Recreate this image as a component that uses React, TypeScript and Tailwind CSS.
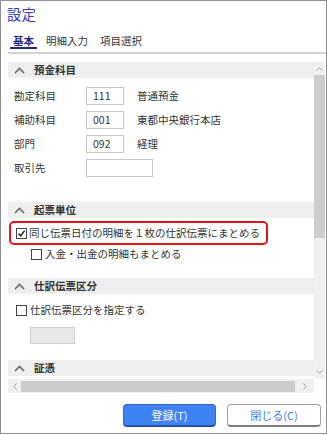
import React from 'react';

const jp = "font-['Noto_Sans_CJK_JP','Noto_Sans',sans-serif]";

function Chevron() {
  return (
    <svg width="11" height="7" viewBox="0 0 11 7" className="shrink-0">
      <polyline points="1,6 5.5,1.5 10,6" fill="none" stroke="#6b6b6b" strokeWidth="1.6" />
    </svg>
  );
}

function SectionHeader({ title, className = '' }: { title: string; className?: string }) {
  return (
    <div className={`h-[16px] bg-[#eeeeee] flex items-center pl-[6px] shrink-0 ${className}`}>
      <Chevron />
      <span className="ml-[9px] text-[10.5px] leading-none font-bold text-[#333]">{title}</span>
    </div>
  );
}

function CheckBox({ checked = false }: { checked?: boolean }) {
  return (
    <span className="w-[11px] h-[11px] border border-[#444] bg-white flex items-center justify-center shrink-0">
      {checked && (
        <svg width="9" height="9" viewBox="0 0 9 9">
          <polyline points="1.5,4.5 3.6,6.8 7.6,1.8" fill="none" stroke="#222" strokeWidth="1.4" />
        </svg>
      )}
    </span>
  );
}

function FieldRow({ label, code, name, wide }: { label: string; code?: string; name?: string; wide?: boolean }) {
  return (
    <div className="h-[18px] flex items-center pl-[6px]">
      <span className="w-[72px] text-[10.5px] text-[#333]">{label}</span>
      <div className={`h-[18px] border border-[#c8c8c8] bg-white flex items-center pl-[6px] text-[10.5px] text-[#333] ${wide ? 'w-[67px]' : 'w-[38px]'}`}>
        {code}
      </div>
      {name && <span className="ml-[13px] text-[10.5px] text-[#333]">{name}</span>}
    </div>
  );
}

export default function App() {
  return (
    <div className={`w-[327px] h-[434px] border border-[#8f8f8f] bg-white flex flex-col ${jp}`}>
      {/* Title */}
      <div className="h-[26px] flex items-center pl-[6px]">
        <span className="text-[14.5px] text-[#3b3bb3] leading-none">設定</span>
      </div>

      {/* Tabs */}
      <div className="h-[22px] flex items-end gap-[6px] pl-[9px] text-[10.5px]">
        <div className="px-[3px] leading-[12px] border-b-2 border-[#1f2a80] font-bold text-[#1f2a80]">基本</div>
        <div className="px-[3px] leading-[12px] border-b-2 border-transparent text-[#333]">明細入力</div>
        <div className="px-[3px] leading-[12px] border-b-2 border-transparent text-[#333]">項目選択</div>
      </div>
      <div className="mt-[3px] ml-[7px] h-[2px] bg-[#d2d2d2]" />

      {/* Scroll area */}
      <div className="mt-[8px] ml-[7px] flex flex-col">
        <div className="h-[317px] flex">
          <div className="w-[306px] overflow-hidden flex flex-col">
            <SectionHeader title="預金科目" />
            <div className="mt-[9px] flex flex-col gap-[6px]">
              <FieldRow label="勘定科目" code="111" name="普通預金" />
              <FieldRow label="補助科目" code="001" name="東都中央銀行本店" />
              <FieldRow label="部門" code="092" name="経理" />
              <FieldRow label="取引先" wide />
            </div>

            <SectionHeader title="起票単位" className="mt-[25px]" />
            <div className="mt-[3px] ml-[1px] w-[259px] h-[24px] border-2 border-[#e8121b] rounded-[5px] flex items-center pl-[5px] gap-[2px] shrink-0">
              <CheckBox checked />
              <span className="text-[10.5px] text-[#333] whitespace-nowrap">同じ伝票日付の明細を１枚の仕訳伝票にまとめる</span>
            </div>
            <div className="mt-[2px] h-[14px] flex items-center pl-[23px] gap-[3px] shrink-0">
              <CheckBox />
              <span className="text-[10.5px] text-[#333]">入金・出金の明細もまとめる</span>
            </div>

            <SectionHeader title="仕訳伝票区分" className="mt-[17px]" />
            <div className="mt-[9px] h-[14px] flex items-center pl-[8px] gap-[3px] shrink-0">
              <CheckBox />
              <span className="text-[10.5px] text-[#333]">仕訳伝票区分を指定する</span>
            </div>
            <div className="mt-[10px] ml-[22px] w-[45px] h-[17px] bg-[#e8e8e8] border border-[#d0d0d0] shrink-0" />

            <SectionHeader title="証憑" className="mt-[16px]" />
          </div>

          {/* Vertical scrollbar */}
          <div className="w-[11px] bg-[#f0f0f0] flex flex-col items-center">
            <div className="h-[13px] flex items-center justify-center">
              <svg width="7" height="4" viewBox="0 0 7 4">
                <polyline points="0.5,3.5 3.5,0.8 6.5,3.5" fill="none" stroke="#a0a0a0" strokeWidth="1" />
              </svg>
            </div>
            <div className="w-full h-[163px] bg-[#cdcdcd]" />
            <div className="flex-1" />
            <div className="h-[14px] flex items-center justify-center">
              <svg width="7" height="4" viewBox="0 0 7 4">
                <polyline points="0.5,0.5 3.5,3.2 6.5,0.5" fill="none" stroke="#a0a0a0" strokeWidth="1" />
              </svg>
            </div>
          </div>
        </div>

        {/* Horizontal scrollbar */}
        <div className="h-[14px] flex">
          <div className="w-[306px] bg-[#f0f0f0] flex items-center">
            <div className="w-[13px] flex justify-center">
              <svg width="4" height="7" viewBox="0 0 4 7">
                <polyline points="3.5,0.5 0.8,3.5 3.5,6.5" fill="none" stroke="#a0a0a0" strokeWidth="1" />
              </svg>
            </div>
            <div className="w-[274px] h-[11px] bg-[#cdcdcd]" />
            <div className="flex-1 flex justify-center">
              <svg width="4" height="7" viewBox="0 0 4 7">
                <polyline points="0.5,0.5 3.2,3.5 0.5,6.5" fill="none" stroke="#a0a0a0" strokeWidth="1" />
              </svg>
            </div>
          </div>
        </div>
      </div>

      {/* Buttons */}
      <div className="mt-[11px] flex justify-end gap-[11px] pr-[5px]">
        <button className="w-[93px] h-[23px] bg-[#3f82f3] border border-[#2f67cc] border-b-2 border-b-[#2552a8] rounded-[4px] text-white text-[11px] leading-none">
          登録(T)
        </button>
        <button className="w-[94px] h-[23px] bg-white border border-[#a0a0a0] border-b-2 border-b-[#7d7d7d] rounded-[4px] text-[#3f7ee6] text-[11px] leading-none">
          閉じる(C)
        </button>
      </div>
    </div>
  );
}
